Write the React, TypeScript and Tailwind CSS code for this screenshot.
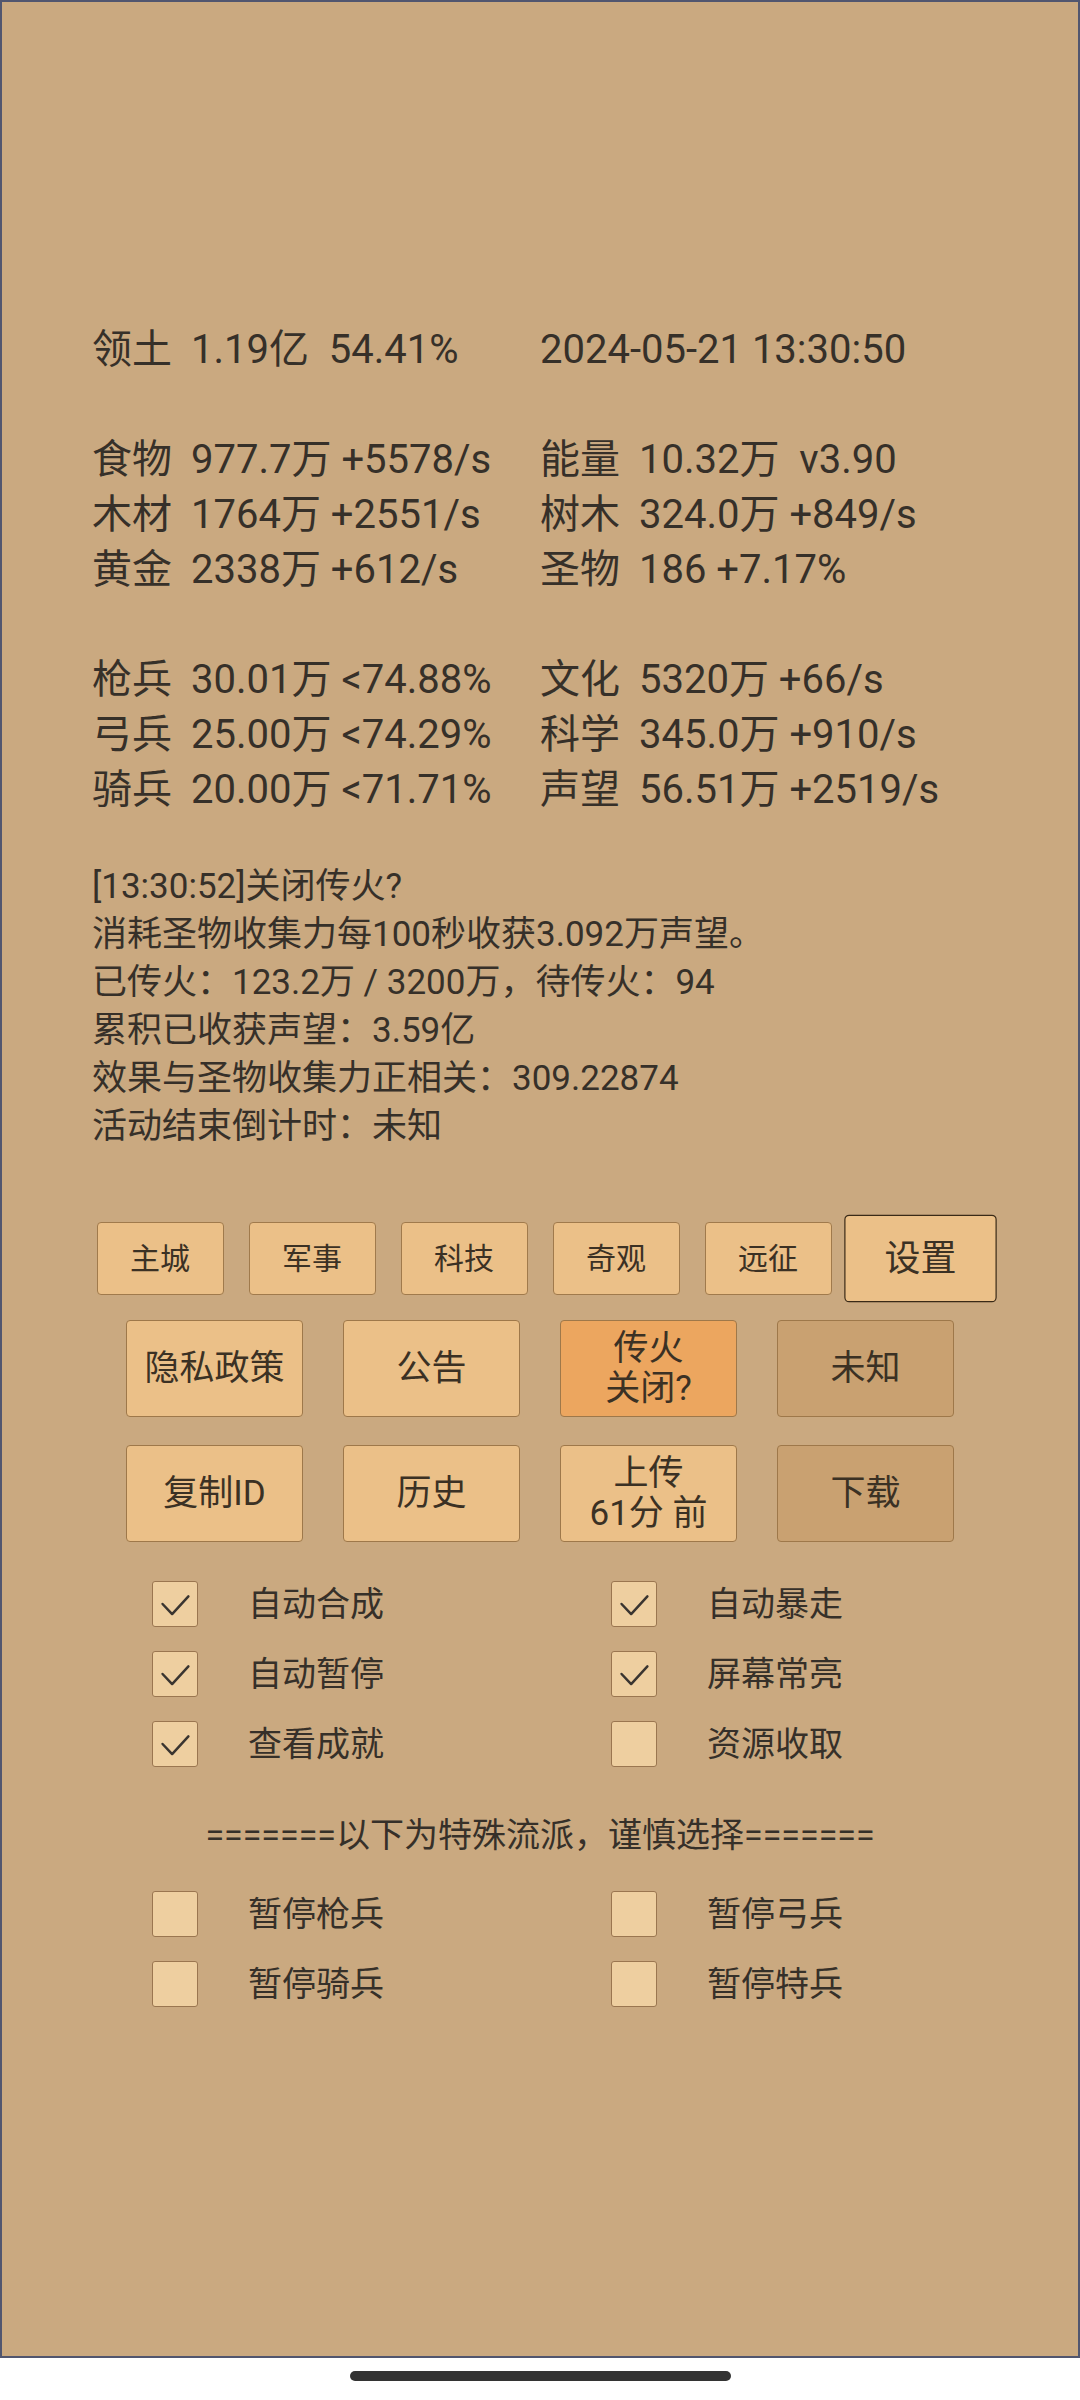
import React from 'react';

const FONT = { fontFamily: 'Roboto, "Noto Sans CJK SC", sans-serif' };

type Cell = { label?: string; value: string };

const stats: (null | [Cell, Cell])[] = [
  [{ label: '领土', value: '1.19亿  54.41%' }, { value: '2024-05-21 13:30:50' }],
  null,
  [{ label: '食物', value: '977.7万 +5578/s' }, { label: '能量', value: '10.32万  v3.90' }],
  [{ label: '木材', value: '1764万 +2551/s' }, { label: '树木', value: '324.0万 +849/s' }],
  [{ label: '黄金', value: '2338万 +612/s' }, { label: '圣物', value: '186 +7.17%' }],
  null,
  [{ label: '枪兵', value: '30.01万 <74.88%' }, { label: '文化', value: '5320万 +66/s' }],
  [{ label: '弓兵', value: '25.00万 <74.29%' }, { label: '科学', value: '345.0万 +910/s' }],
  [{ label: '骑兵', value: '20.00万 <71.71%' }, { label: '声望', value: '56.51万 +2519/s' }],
];

const logLines = [
  '[13:30:52]关闭传火?',
  '消耗圣物收集力每100秒收获3.092万声望。',
  '已传火：123.2万 / 3200万，待传火：94',
  '累积已收获声望：3.59亿',
  '效果与圣物收集力正相关：309.22874',
  '活动结束倒计时：未知',
];

function StatCell({ cell, wide }: { cell: Cell; wide?: boolean }) {
  return (
    <div className={`flex whitespace-pre ${wide ? 'w-[448px]' : ''}`}>
      {cell.label && <span className="w-[99px] shrink-0">{cell.label}</span>}
      <span>{cell.value}</span>
    </div>
  );
}

function TabButton({ text, active }: { text: string; active?: boolean }) {
  return (
    <div
      className={`w-[127px] h-[73px] flex items-center justify-center rounded-[4px] bg-[#ebc088] text-[30px] ${
        active ? 'scale-120 border-[1.5px] border-[#3a2a17]' : 'border border-[#a07a4c]'
      }`}
    >
      {text}
    </div>
  );
}

function BigButton({ lines, tone }: { lines: string[]; tone?: 'orange' | 'dark' }) {
  const bg = tone === 'orange' ? 'bg-[#eca65f]' : tone === 'dark' ? 'bg-[#c9a171]' : 'bg-[#ebc088]';
  return (
    <div
      className={`w-[177px] h-[97px] flex flex-col items-center justify-center rounded-[4px] border border-[#9e784a] text-[35px] leading-[40px] ${bg}`}
    >
      {lines.map((l) => (
        <span key={l} className="whitespace-pre">
          {l}
        </span>
      ))}
    </div>
  );
}

function Check({ label, checked }: { label: string; checked?: boolean }) {
  return (
    <div className="flex items-center h-[70px]">
      <div className="w-[46px] h-[46px] rounded-[3px] border border-[#9a7650] bg-[#eecfa0] flex items-center justify-center">
        {checked && (
          <svg width="46" height="46" viewBox="0 0 46 46">
            <polyline points="10,23 20,33.5 37,15" fill="none" stroke="#3a3530" strokeWidth="2.6" strokeLinecap="round" strokeLinejoin="round" />
          </svg>
        )}
      </div>
      <span className="ml-[50px] text-[34px]">{label}</span>
    </div>
  );
}

export default function App() {
  return (
    <div className="min-h-[2400px] bg-white text-[#363029]" style={FONT}>
      <div className="h-[2358px] bg-[#caa980] border-2 border-[#51566f] flex flex-col">
        <div className="pt-[320px] pl-[90px] text-[40px] leading-[55px]">
          {stats.map((row, i) =>
            row ? (
              <div key={i} className="flex">
                <StatCell cell={row[0]} wide />
                <StatCell cell={row[1]} />
              </div>
            ) : (
              <div key={i} className="h-[55px]" />
            ),
          )}
        </div>

        <div className="mt-[46px] pl-[90px] text-[35px] leading-[48px]">
          {logLines.map((l) => (
            <div key={l}>{l}</div>
          ))}
        </div>

        <div className="mt-[71px] flex flex-col items-center text-[#3b3124]">
          <div className="flex gap-[25px]">
            <TabButton text="主城" />
            <TabButton text="军事" />
            <TabButton text="科技" />
            <TabButton text="奇观" />
            <TabButton text="远征" />
            <TabButton text="设置" active />
          </div>
          <div className="flex gap-[40px] mt-[25px]">
            <BigButton lines={['隐私政策']} />
            <BigButton lines={['公告']} />
            <BigButton lines={['传火', '关闭?']} tone="orange" />
            <BigButton lines={['未知']} tone="dark" />
          </div>
          <div className="flex gap-[40px] mt-[28px]">
            <BigButton lines={['复制ID']} />
            <BigButton lines={['历史']} />
            <BigButton lines={['上传', '61分 前']} />
            <BigButton lines={['下载']} tone="dark" />
          </div>
        </div>

        <div className="mt-[27px] pl-[150px] grid grid-cols-[459px_459px]">
          <Check label="自动合成" checked />
          <Check label="自动暴走" checked />
          <Check label="自动暂停" checked />
          <Check label="屏幕常亮" checked />
          <Check label="查看成就" checked />
          <Check label="资源收取" />
        </div>

        <div className="mt-[32px] text-center text-[34px] leading-[48px] whitespace-pre">
          =======以下为特殊流派，谨慎选择=======
        </div>

        <div className="mt-[20px] pl-[150px] grid grid-cols-[459px_459px]">
          <Check label="暂停枪兵" />
          <Check label="暂停弓兵" />
          <Check label="暂停骑兵" />
          <Check label="暂停特兵" />
        </div>
      </div>
      <div className="mt-[13px] mx-auto w-[381px] h-[10px] rounded-full bg-[#333333]" />
    </div>
  );
}
